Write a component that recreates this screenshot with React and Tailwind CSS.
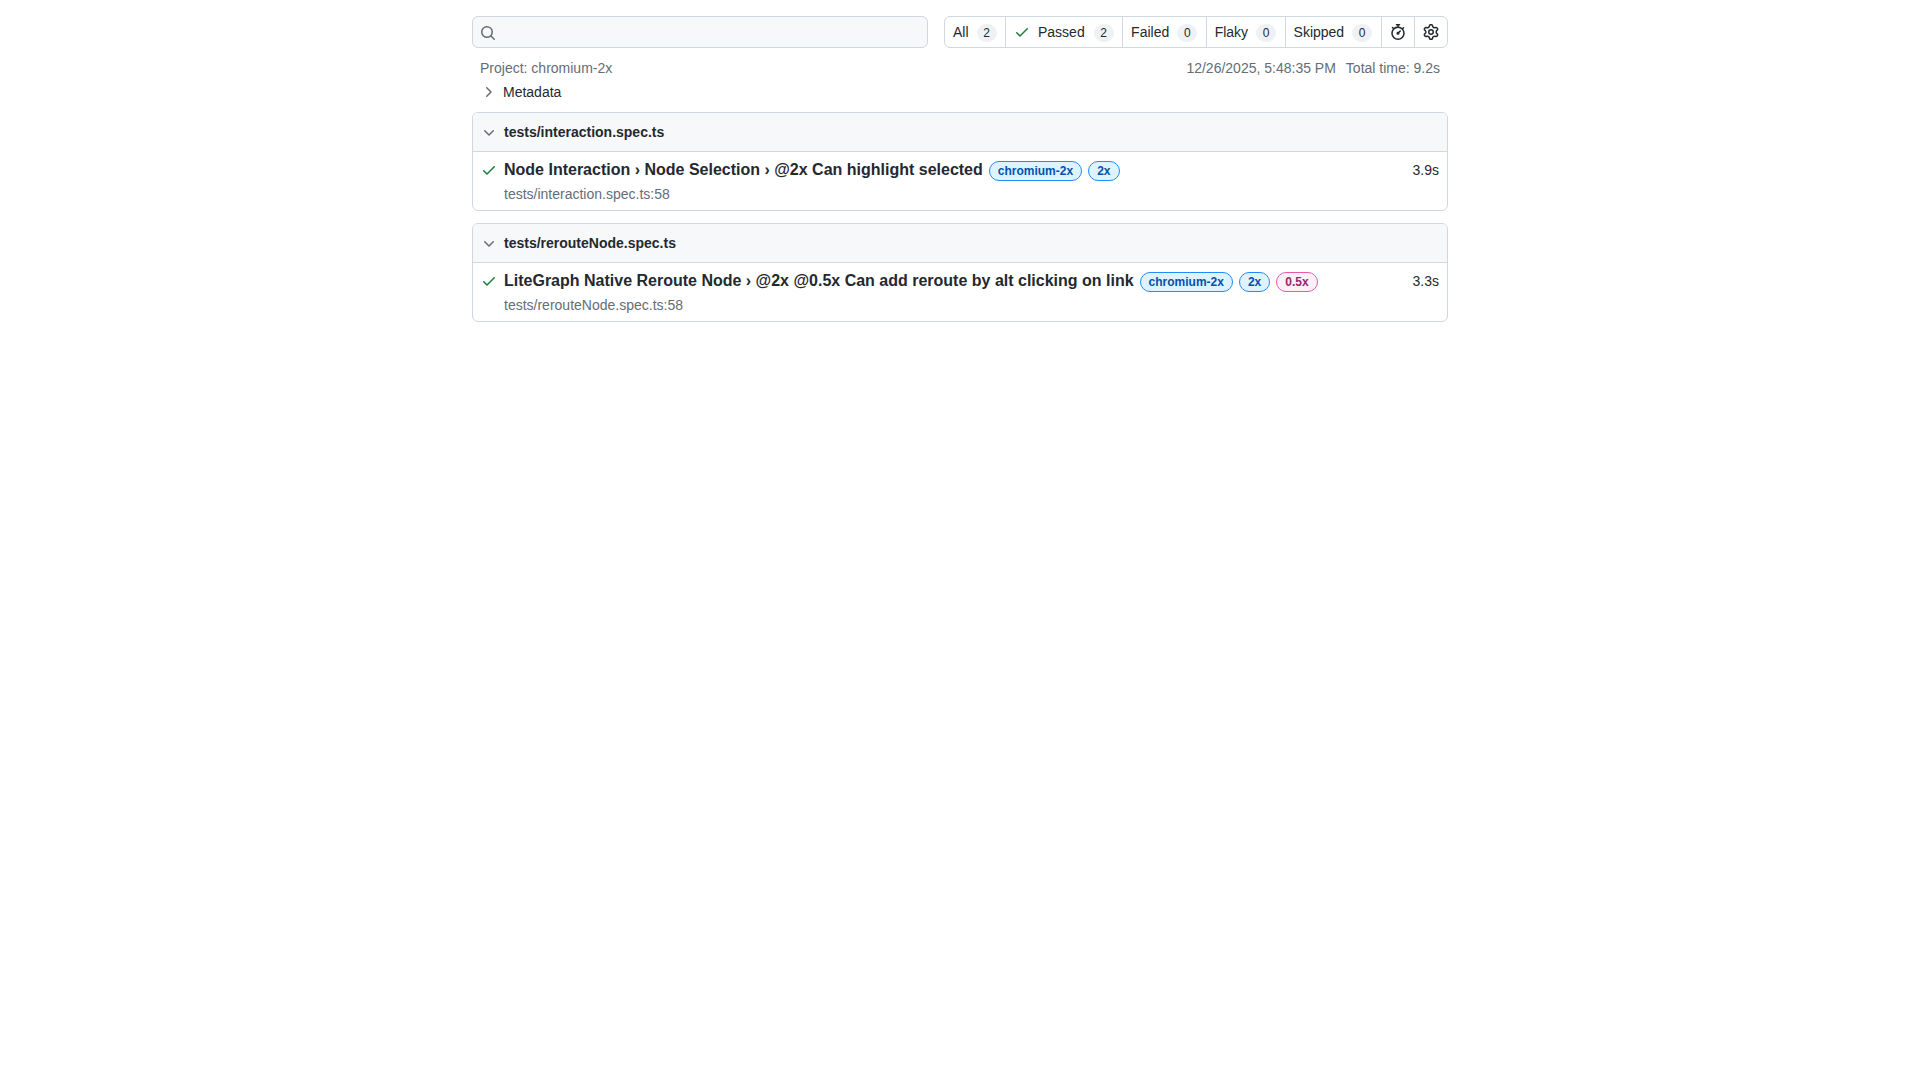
import React from "react";

const P = {
  search: "M10.68 11.74a6 6 0 0 1-7.922-8.982 6 6 0 0 1 8.982 7.922l3.04 3.04a.749.749 0 0 1-.326 1.275.749.749 0 0 1-.734-.215ZM11.5 7a4.499 4.499 0 1 0-8.997 0A4.499 4.499 0 0 0 11.5 7Z",
  check: "M13.78 4.22a.75.75 0 0 1 0 1.06l-7.25 7.25a.75.75 0 0 1-1.06 0L2.22 9.28a.751.751 0 0 1 .018-1.042.751.751 0 0 1 1.042-.018L6 10.94l6.72-6.72a.75.75 0 0 1 1.06 0Z",
  right: "M6.22 3.22a.75.75 0 0 1 1.06 0l4.25 4.25a.75.75 0 0 1 0 1.06l-4.25 4.25a.751.751 0 0 1-1.042-.018.751.751 0 0 1-.018-1.042L9.94 8 6.22 4.28a.75.75 0 0 1 0-1.06Z",
  down: "M12.78 5.22a.749.749 0 0 1 0 1.06l-4.25 4.25a.749.749 0 0 1-1.06 0L3.22 6.28a.749.749 0 1 1 1.06-1.06L8 8.939l3.72-3.719a.749.749 0 0 1 1.06 0Z",
  stopwatch: "M5.75.75A.75.75 0 0 1 6.5 0h3a.75.75 0 0 1 0 1.5h-.75v1l-.001.041a6.724 6.724 0 0 1 3.464 1.435l.007-.006.75-.75a.749.749 0 0 1 1.275.326.749.749 0 0 1-.215.734l-.75.75-.006.007a6.75 6.75 0 1 1-10.548 0L2.72 4.78l-.75-.75a.751.751 0 0 1 .018-1.042.751.751 0 0 1 1.042-.018l.75.75.007.006A6.72 6.72 0 0 1 7.25 2.541V1.5H6.5a.75.75 0 0 1-.75-.75ZM8 14.5a5.25 5.25 0 1 0-.001-10.501A5.25 5.25 0 0 0 8 14.5Zm.389-6.7 1.33-1.33a.75.75 0 1 1 1.061 1.06L9.45 8.861A1.503 1.503 0 0 1 8 10.75a1.499 1.499 0 1 1 .389-2.95Z",
  gear: "M8 0a8.2 8.2 0 0 1 .701.031C9.444.095 9.99.645 10.16 1.29l.288 1.107c.018.066.079.158.212.224.231.114.454.243.668.386.123.082.233.09.299.071l1.103-.303c.644-.176 1.392.021 1.82.63.27.385.506.792.704 1.218.315.675.111 1.422-.364 1.891l-.814.806c-.049.048-.098.147-.088.294.016.257.016.515 0 .772-.01.147.038.246.088.294l.814.806c.475.469.679 1.216.364 1.891a7.977 7.977 0 0 1-.704 1.217c-.428.61-1.176.807-1.82.63l-1.102-.302c-.067-.019-.177-.011-.3.071a5.909 5.909 0 0 1-.668.386c-.133.066-.194.158-.211.224l-.29 1.106c-.168.646-.715 1.196-1.458 1.26a8.006 8.006 0 0 1-1.402 0c-.743-.064-1.289-.614-1.458-1.26l-.289-1.106c-.018-.066-.079-.158-.212-.224a5.738 5.738 0 0 1-.668-.386c-.123-.082-.233-.09-.299-.071l-1.103.303c-.644.176-1.392-.021-1.82-.63a8.12 8.12 0 0 1-.704-1.218c-.315-.675-.111-1.422.363-1.891l.815-.806c.05-.048.098-.147.088-.294a6.214 6.214 0 0 1 0-.772c.01-.147-.038-.246-.088-.294l-.815-.806C.635 6.045.431 5.298.746 4.623a7.92 7.92 0 0 1 .704-1.217c.428-.61 1.176-.807 1.82-.63l1.102.302c.067.019.177.011.3-.071.214-.143.437-.272.668-.386.133-.066.194-.158.211-.224l.29-1.106C6.009.645 6.556.095 7.299.03 7.53.01 7.764 0 8 0Zm-.571 1.525c-.036.003-.108.036-.137.146l-.289 1.105c-.147.561-.549.967-.998 1.189-.173.086-.34.183-.5.29-.417.278-.97.423-1.529.27l-1.103-.303c-.109-.03-.175.016-.195.045-.22.312-.412.644-.573.99-.014.031-.021.11.059.19l.815.806c.411.406.562.957.53 1.456a4.709 4.709 0 0 0 0 .582c.032.499-.119 1.05-.53 1.456l-.815.806c-.081.08-.073.159-.059.19.162.346.353.677.573.989.02.03.085.076.195.046l1.102-.303c.56-.153 1.113-.008 1.53.27.161.107.328.204.501.29.447.222.85.629.997 1.189l.289 1.105c.029.109.101.143.137.146a6.6 6.6 0 0 0 1.142 0c.036-.003.108-.036.137-.146l.289-1.105c.147-.561.549-.967.998-1.189.173-.086.34-.183.5-.29.417-.278.97-.423 1.529-.27l1.103.303c.109.029.175-.016.195-.045.22-.313.411-.644.573-.99.014-.031.021-.11-.059-.19l-.815-.806c-.411-.406-.562-.957-.53-1.456a4.709 4.709 0 0 0 0-.582c-.032-.499.119-1.05.53-1.456l.815-.806c.081-.08.073-.159.059-.19a6.464 6.464 0 0 0-.573-.989c-.02-.03-.085-.076-.195-.046l-1.102.303c-.56.153-1.113.008-1.53-.27a4.44 4.44 0 0 0-.501-.29c-.447-.222-.85-.629-.997-1.189l-.289-1.105c-.029-.11-.101-.143-.137-.146a6.6 6.6 0 0 0-1.142 0ZM11 8a3 3 0 1 1-6 0 3 3 0 0 1 6 0ZM9.5 8a1.5 1.5 0 1 0-3.001.001A1.5 1.5 0 0 0 9.5 8Z",
};

function Icon({ d, className }) {
  return (
    <svg viewBox="0 0 16 16" width="16" height="16" fill="currentColor" className={className}>
      <path d={d} />
    </svg>
  );
}

function Count({ children, wide }) {
  return (
    <span
      className={
        "inline-block mt-[1px] min-w-[20px] h-[18px] px-[6px] rounded-[20px] bg-[#eff2f5] text-[12px] leading-[18px] text-center text-[#24292f] " +
        (wide ? "ml-[9px]" : "ml-[8px]")
      }
    >
      {children}
    </span>
  );
}

function Filter({ label, count, check }) {
  return (
    <a className="flex items-center h-full px-[8px] border-l border-[#d0d7de] first:border-l-0 whitespace-nowrap">
      {check && <Icon d={P.check} className="text-[#1a7f37] mr-[8px]" />}
      {label}
      <Count wide={check}>{count}</Count>
    </a>
  );
}

function Tag({ children, pink }) {
  return (
    <span
      className={
        "ml-[6px] mt-[1px] inline-block h-[20px] px-[8px] rounded-[2em] border text-[12px] leading-[18px] font-bold align-middle " +
        (pink
          ? "bg-[#ffeff7] border-[#e85aad] text-[#99286e]"
          : "bg-[#ddf4ff] border-[#218bff] text-[#0550ae]")
      }
    >
      {children}
    </span>
  );
}

function Chip({ file, title, tags, loc, time, className }) {
  return (
    <div className={"border border-[#d0d7de] rounded-[6px] overflow-hidden " + className}>
      <div className="flex items-center h-[39px] pl-[8px] bg-[#f6f8fa] border-b border-[#d0d7de] text-[14px] font-bold text-[#24292f]">
        <Icon d={P.down} className="text-[#656d76] mr-[7px] mt-[1px] shrink-0" />
        {file}
      </div>
      <div className="flex h-[58px] pl-[8px] pr-[8px] pt-[6px]">
        <Icon d={P.check} className="text-[#1a7f37] mr-[7px] mt-[4px] shrink-0" />
        <div className="flex-1">
          <div className="h-[24px] flex items-center">
            <span className="text-[16px] font-bold text-[#24292f]">{title}</span>
            {tags.map((t) => (
              <Tag key={t} pink={t === "0.5x"}>{t}</Tag>
            ))}
          </div>
          <div className="text-[14px] leading-[24px] text-[#656d76]">{loc}</div>
        </div>
        <div className="text-[14px] leading-[24px] text-[#24292f]">{time}</div>
      </div>
    </div>
  );
}

export default function App() {
  return (
    <div className="w-[976px] mx-auto pt-[16px] min-h-[1080px] bg-white text-[#24292f] text-[14px] font-['Liberation_Sans',Arial,sans-serif]">
      <div className="flex h-[32px]">
        <div className="w-[456px] h-[32px] flex items-center pl-[7px] bg-[#f6f8fa] border border-[#d0d7de] rounded-[6px] text-[#656d76]">
          <Icon d={P.search} className="mt-[1px]" />
        </div>
        <div className="ml-[16px] flex-1 flex justify-between h-[32px] border border-[#d0d7de] rounded-[6px]">
          <Filter label="All" count="2" />
          <Filter label="Passed" count="2" check />
          <Filter label="Failed" count="0" />
          <Filter label="Flaky" count="0" />
          <Filter label="Skipped" count="0" />
          <a className="flex items-center px-[8px] h-full border-l border-[#d0d7de]"><Icon d={P.stopwatch} /></a>
          <a className="flex items-center px-[8px] h-full border-l border-[#d0d7de]"><Icon d={P.gear} /></a>
        </div>
      </div>
      <div className="flex justify-between px-[8px] mt-[8px] h-[24px] leading-[24px] text-[#656d76]">
        <div>Project: chromium-2x</div>
        <div>
          <span>12/26/2025, 5:48:35 PM</span>
          <span className="ml-[10px]">Total time: 9.2s</span>
        </div>
      </div>
      <div className="flex items-center h-[24px] pl-[8px]">
        <Icon d={P.right} className="text-[#656d76] mr-[7px]" />
        Metadata
      </div>
      <Chip
        className="mt-[8px]"
        file="tests/interaction.spec.ts"
        title="Node Interaction › Node Selection › @2x Can highlight selected"
        tags={["chromium-2x", "2x"]}
        loc="tests/interaction.spec.ts:58"
        time="3.9s"
      />
      <Chip
        className="mt-[12px]"
        file="tests/rerouteNode.spec.ts"
        title="LiteGraph Native Reroute Node › @2x @0.5x Can add reroute by alt clicking on link"
        tags={["chromium-2x", "2x", "0.5x"]}
        loc="tests/rerouteNode.spec.ts:58"
        time="3.3s"
      />
    </div>
  );
}
